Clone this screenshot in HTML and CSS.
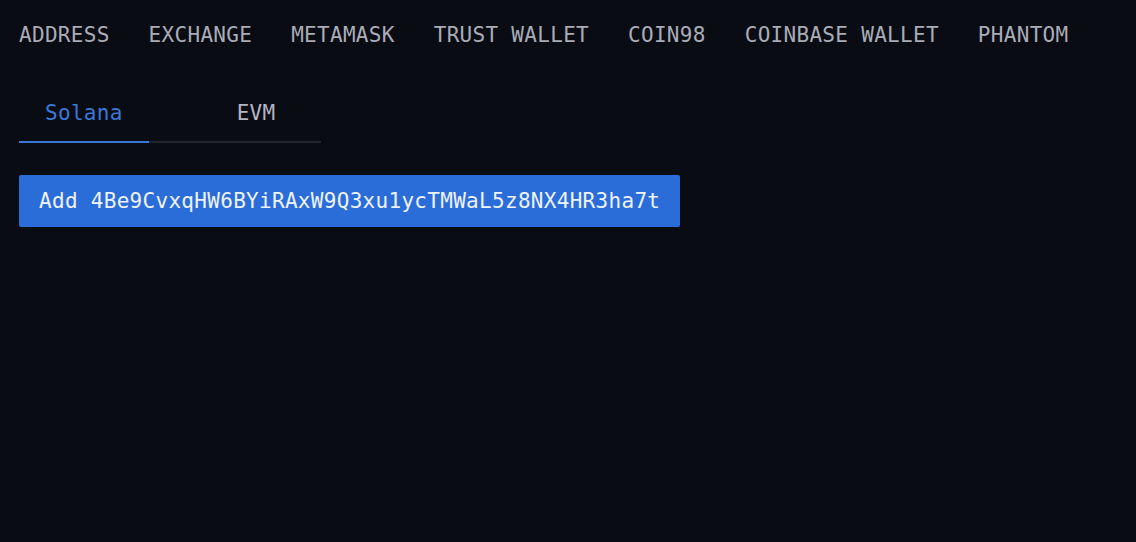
FILE: index.html
```html
<!DOCTYPE html>
<html lang="en">
<head>
<meta charset="utf-8">
<title>Wallets</title>
<link rel="stylesheet" href="styles.css">
</head>
<body>
<div class="page">
  <nav class="nav">
    <span class="nav-item">ADDRESS</span>
    <span class="nav-item">EXCHANGE</span>
    <span class="nav-item">METAMASK</span>
    <span class="nav-item">TRUST WALLET</span>
    <span class="nav-item">COIN98</span>
    <span class="nav-item">COINBASE WALLET</span>
    <span class="nav-item">PHANTOM</span>
  </nav>
  <div class="tabs">
    <span class="tab active">Solana</span>
    <span class="tab">EVM</span>
  </div>
  <div class="actions">
    <button class="add-btn">Add 4Be9CvxqHW6BYiRAxW9Q3xu1ycTMWaL5z8NX4HR3ha7t</button>
  </div>
</div>
</body>
</html>
```
FILE: styles.css
```css
html, body {
  margin: 0;
  padding: 0;
  background: #0a0c14;
  height: 100%;
}
.page {
  font-family: "DejaVu Sans Mono", "Liberation Mono", monospace;
  font-size: 21px;
  letter-spacing: 0.3px;
  line-height: 32px;
  padding: 19px 19px 0 19px;
  color: #a9acb7;
}
.nav {
  display: flex;
  gap: 39px;
  white-space: nowrap;
}
.nav-item {
  color: #a9acb7;
}
.tabs {
  display: flex;
  gap: 62px;
  width: 302px;
  margin-top: 36px;
  border-bottom: 2px solid #22252d;
}
.tab {
  padding: 10px 26px 12px;
  color: #b3b6c0;
}
.tab.active {
  color: #3a78d8;
  border-bottom: 2px solid #3a78d8;
  margin-bottom: -2px;
}
.actions {
  margin-top: 32px;
  display: flex;
}
.add-btn {
  font: inherit;
  letter-spacing: inherit;
  line-height: 32px;
  background: #2a6dd9;
  color: #eef2fb;
  border: none;
  border-radius: 2px;
  padding: 10px 20px;
  white-space: nowrap;
  cursor: pointer;
}
```
